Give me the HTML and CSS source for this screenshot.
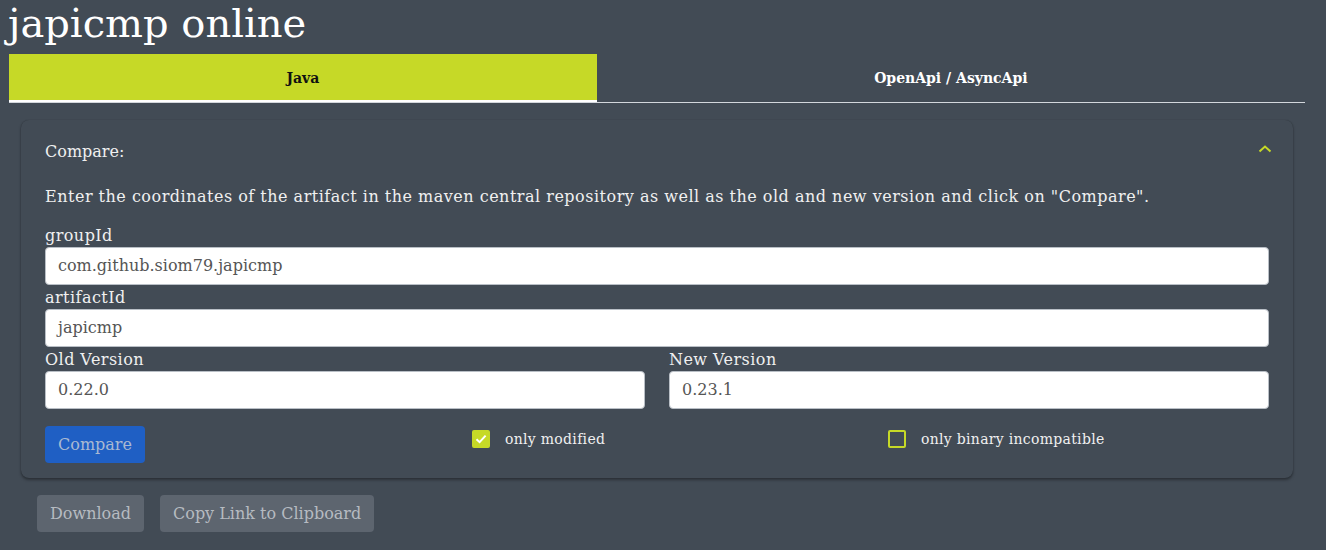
FILE: index.html
```html
<!DOCTYPE html>
<html lang="en">
<head>
<meta charset="utf-8">
<title>japicmp online</title>
<link rel="stylesheet" href="styles.css">
</head>
<body>
<h1 class="title">japicmp online</h1>
<div class="tabs">
  <div class="tab active">Java</div>
  <div class="tab">OpenApi / AsyncApi</div>
</div>
<section class="card">
  <div class="card-header">
    <span>Compare:</span>
    <svg class="chevron" width="14" height="10" viewBox="0 0 14 10"><path d="M1.5 7.5 L7 2.5 L12.5 7.5" fill="none" stroke="#c6d927" stroke-width="2"/></svg>
  </div>
  <p class="desc">Enter the coordinates of the artifact in the maven central repository as well as the old and new version and click on "Compare".</p>
  <label class="label">groupId</label>
  <div class="input">com.github.siom79.japicmp</div>
  <label class="label">artifactId</label>
  <div class="input">japicmp</div>
  <div class="versions">
    <div class="field">
      <label class="label">Old Version</label>
      <div class="input">0.22.0</div>
    </div>
    <div class="field">
      <label class="label">New Version</label>
      <div class="input">0.23.1</div>
    </div>
  </div>
  <div class="controls">
    <div><button class="btn primary">Compare</button></div>
    <div class="check"><span class="box checked"><svg width="14" height="14" viewBox="0 0 14 14"><path d="M2.5 7.3 L5.6 10.2 L11.6 3.6" fill="none" stroke="#ffffff" stroke-width="2"/></svg></span><span>only modified</span></div>
    <div class="check"><span class="box"></span><span>only binary incompatible</span></div>
  </div>
</section>
<div class="actions">
  <button class="btn muted">Download</button>
  <button class="btn muted">Copy Link to Clipboard</button>
</div>
</body>
</html>
```
FILE: styles.css
```css
html, body {
  margin: 0;
  padding: 0;
  background: #424b55;
  color: #f2f2f2;
  font-family: "DejaVu Serif", serif;
  font-size: 16px;
}
.title {
  margin: 0 0 0 8px;
  font-size: 40px;
  font-weight: normal;
  line-height: 46px;
  height: 54px;
  color: #ffffff;
}
.tabs {
  display: flex;
  margin: 0 21px 0 9px;
  border-bottom: 1px solid #d3d7dc;
}
.tab {
  flex: auto;
  height: 48px;
  display: flex;
  align-items: center;
  justify-content: center;
  font-weight: bold;
  font-size: 14px;
  color: #ffffff;
  padding: 0 16px;
}
.tab.active {
  background: #c6d927;
  color: #111111;
  box-shadow: inset 0 -2px 0 #ffffff;
}
.card {
  margin: 17px 33px 0 21px;
  padding: 0 24px 15px;
  border-radius: 8px;
  background: #424b55;
  box-shadow: 0 2px 3px rgba(0,0,0,0.35), 0 0 1px rgba(0,0,0,0.3);
}
.card-header {
  height: 62px;
  display: flex;
  align-items: center;
  justify-content: space-between;
  color: #f0f0f0;
}
.chevron {
  margin-right: -3px;
  margin-top: -4px;
}
.desc {
  margin: 3px 0 14px;
  line-height: 24px;
  letter-spacing: 0.5px;
  color: #f0f0f0;
}
.label {
  display: block;
  padding-top: 2px;
  line-height: 22px;
  letter-spacing: 0.45px;
  color: #f0f0f0;
}
.input {
  height: 36px;
  line-height: 36px;
  border: 1px solid #b9bfc6;
  border-radius: 4px;
  background: #ffffff;
  color: #555555;
  font-size: 16px;
  padding: 0 12px;
}
.versions {
  display: grid;
  grid-template-columns: 1fr 1fr;
  gap: 24px;
}
.controls {
  display: grid;
  grid-template-columns: 427px 416px 1fr;
  align-items: center;
  margin-top: 17px;
}
.btn {
  font-family: "DejaVu Serif", serif;
  font-size: 16px;
  height: 37px;
  border: 0;
  border-radius: 4px;
  padding: 0 13px;
}
.btn.primary {
  background: #1f5fc4;
  color: #a9b9d2;
  width: 100px;
}
.check {
  display: flex;
  align-items: center;
  gap: 15px;
  font-size: 14px;
  letter-spacing: 0.3px;
  color: #f0f0f0;
  margin-top: -11px;
}
.box {
  width: 18px;
  height: 18px;
  box-sizing: border-box;
  border: 2px solid #c6d927;
  border-radius: 2px;
  display: flex;
  align-items: center;
  justify-content: center;
}
.box.checked {
  background: #c6d927;
}
.actions {
  display: flex;
  gap: 16px;
  margin: 17px 0 0 37px;
}
.btn.muted {
  background: #5d656f;
  color: #b6bbc1;
}
```
